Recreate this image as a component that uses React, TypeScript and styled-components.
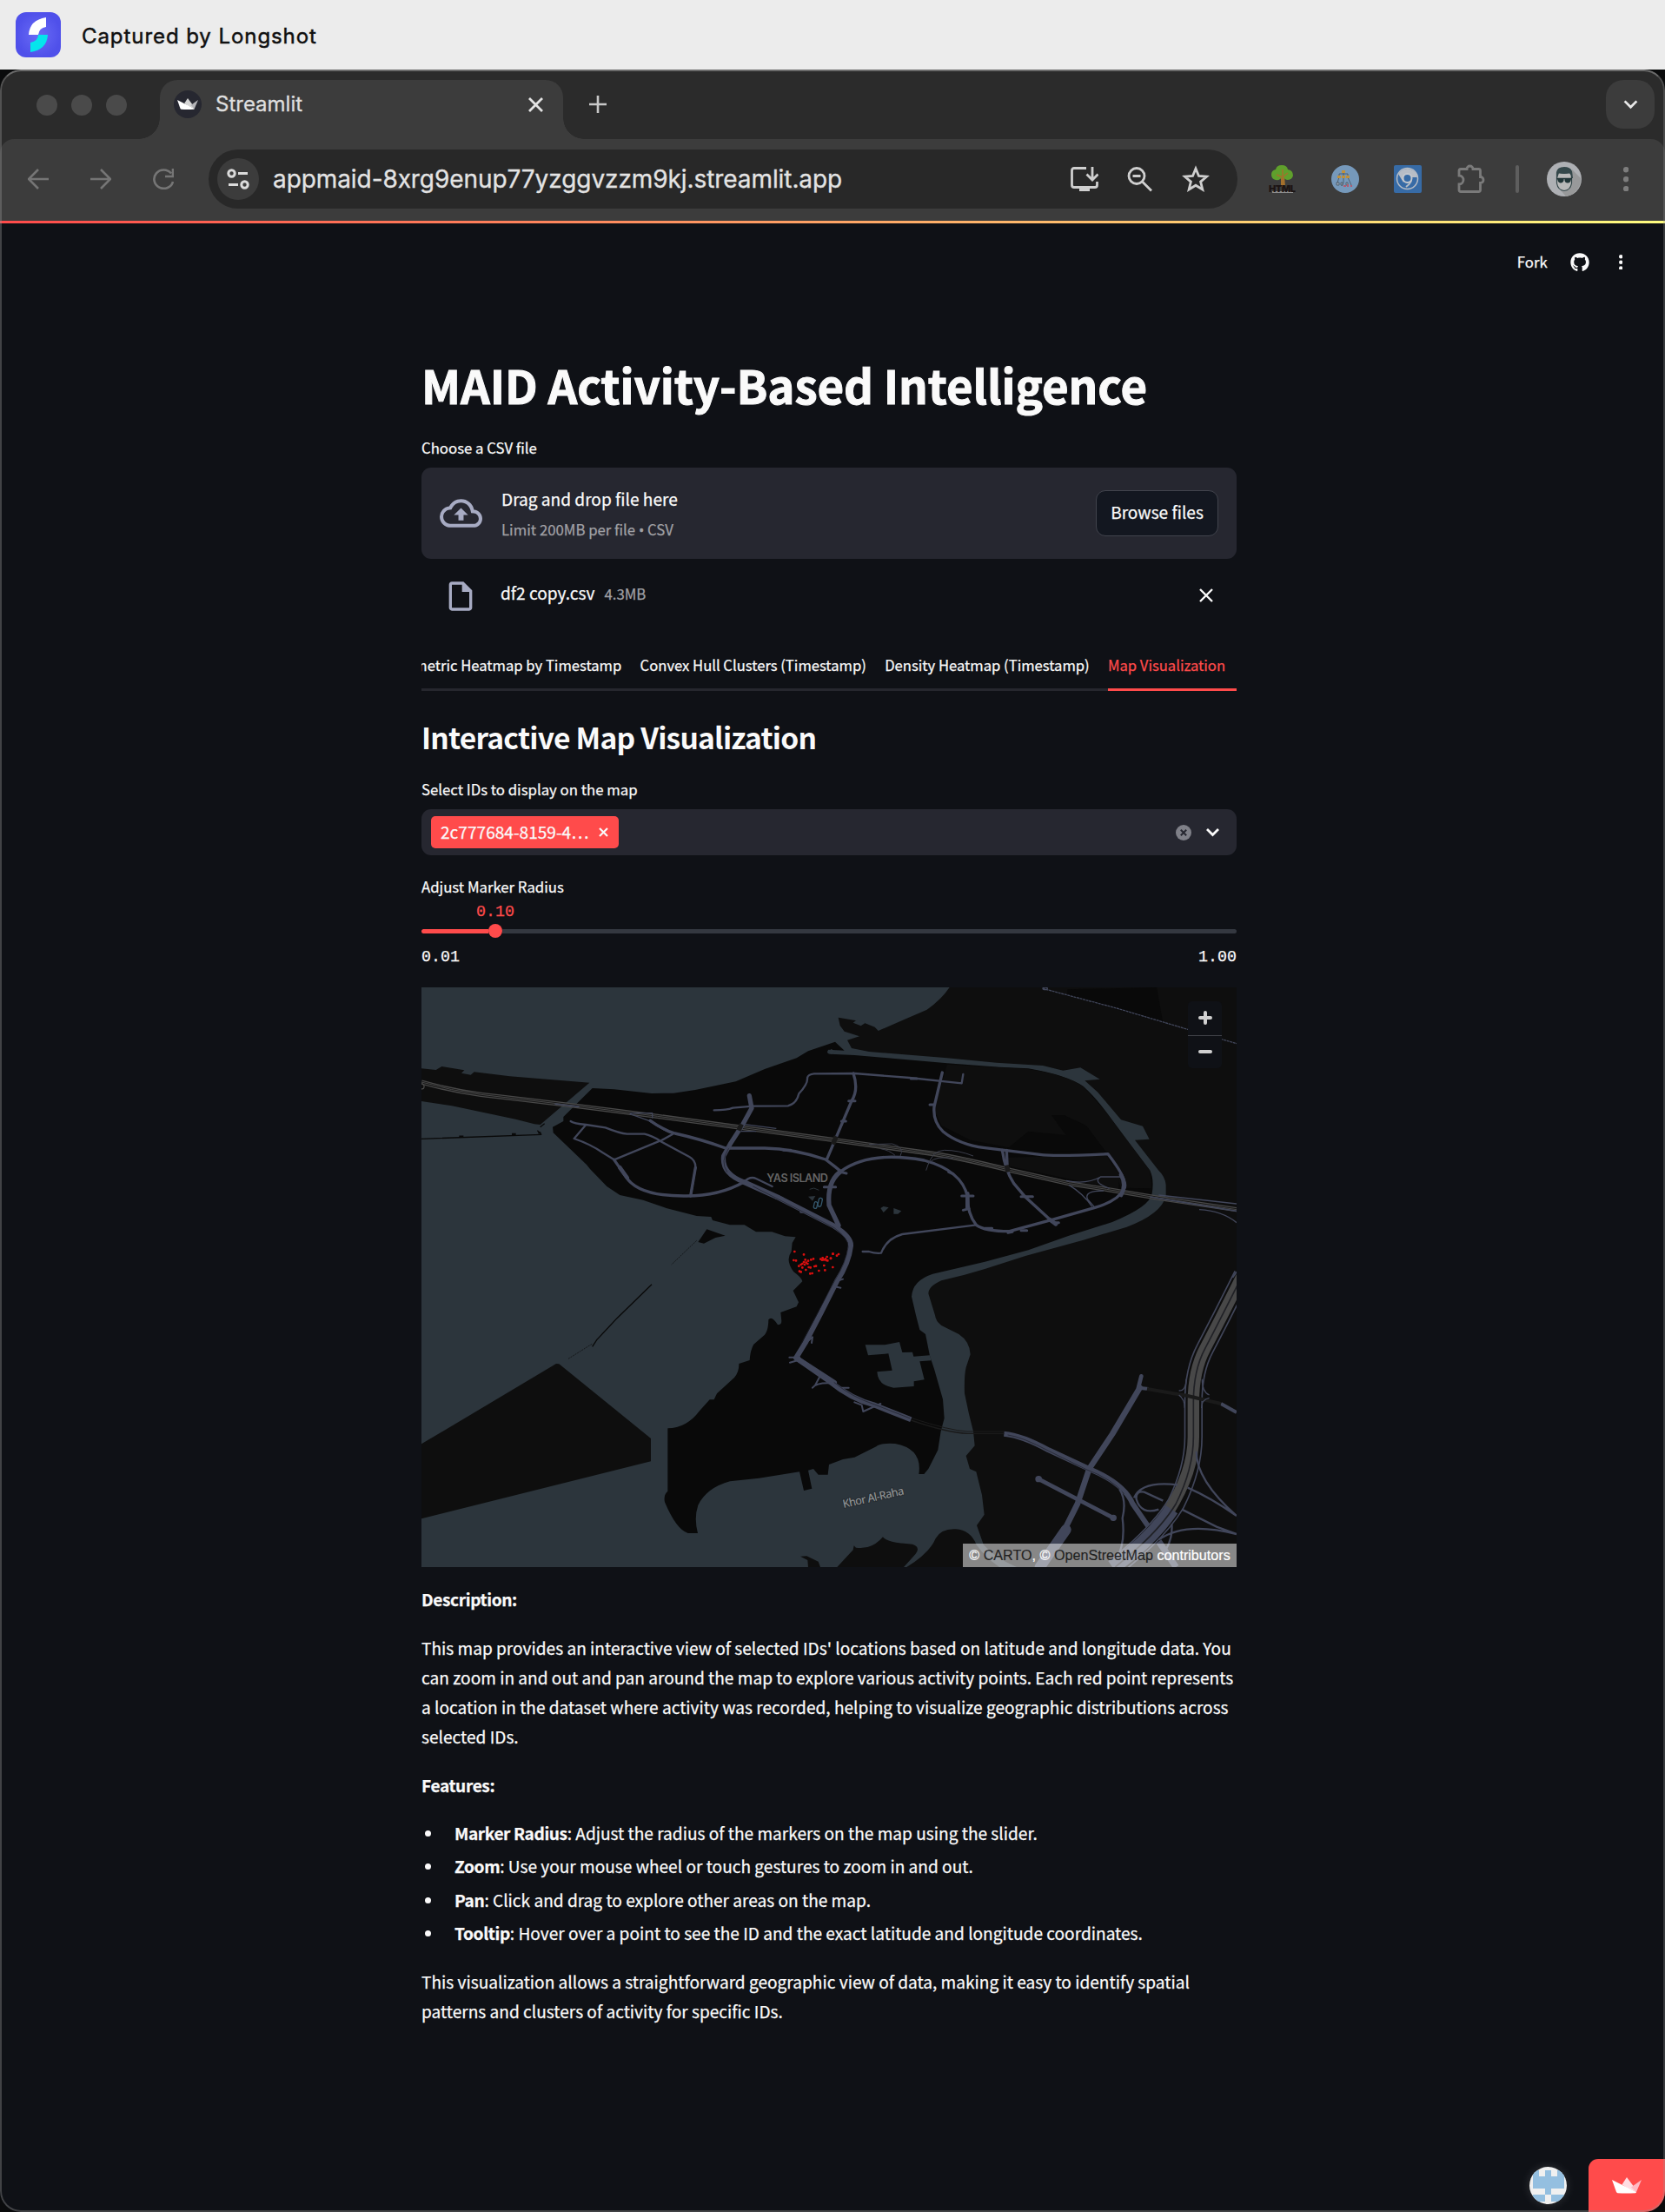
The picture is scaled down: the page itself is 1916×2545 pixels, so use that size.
import React from "react";
import styled, { createGlobalStyle, css } from "styled-components";
import { MdOutlineBackup, MdOutlineInsertDriveFile } from "react-icons/md";
import { FaGithub } from "react-icons/fa";

const sans = `"Noto Sans CJK SC", "Open Sans", sans-serif`;
const system = `Inter, Roboto, sans-serif`;
const mono = `"Liberation Mono", "DejaVu Sans Mono", monospace`;

const c = {
  page: "#0f1116",
  panel: "#262730",
  red: "#ff4b4b",
  text: "#fafafa",
  muted: "#a0a0a5",
  strip: "#2b2b2b",
  bar: "#3c3c3c",
  water: "#2c353c",
  land: "#0e0e0e",
  island: "#090909",
  road: "#41465a",
  rail: "#484848",
};

const GlobalStyle = createGlobalStyle`
  *, *::before, *::after { box-sizing: border-box; }
  body { margin: 0; background: #0a0b0c; }
  h1, h2, p, ul { margin: 0; padding: 0; }
  button { font: inherit; color: inherit; padding: 0; border: 0; background: none; }
  svg { display: block; flex: none; }
`;

const Screen = styled.div`
  width: 1916px;
  height: 2545px;
  display: flex;
  flex-direction: column;
  overflow: hidden;
  background: #0a0b0c;
  color: ${c.text};
  font-family: ${sans};
`;

const Banner = styled.header`
  height: 80px;
  flex: none;
  display: flex;
  align-items: center;
  gap: 24px;
  padding-left: 18px;
  background: #ececec;
  color: #101010;
  font: 500 24px/30px ${system};
`;

const BannerText = styled.span`
  letter-spacing: 0.93px;
  font-weight: 400;
  -webkit-text-stroke: 0.5px #101010;
  padding-top: 4px;
`;

const BrowserWindow = styled.section`
  position: relative;
  flex: 1;
  display: flex;
  flex-direction: column;
  border-radius: 24px;
  overflow: hidden;
  background: ${c.strip};
  &::after {
    content: "";
    position: absolute;
    inset: 0;
    border: 2px solid rgba(150, 150, 150, 0.38);
    border-right-color: rgba(150, 150, 150, 0.3);
    border-top-color: rgba(170, 170, 170, 0.5);
    border-radius: 24px;
    pointer-events: none;
  }
`;

const TabStrip = styled.div`
  height: 80px;
  flex: none;
  display: flex;
  align-items: flex-end;
  padding: 0 12px 0 42px;
  font-family: ${system};
`;

const Lights = styled.div`
  display: flex;
  gap: 16px;
  height: 68px;
  width: 142px;
  padding-top: 17px;
`;

const Light = styled.i`
  width: 24px;
  height: 24px;
  border-radius: 50%;
  background: #4a4a4a;
`;

const flare = css`
  content: "";
  position: absolute;
  bottom: 0;
  width: 24px;
  height: 24px;
`;

const BrowserTab = styled.div`
  position: relative;
  width: 464px;
  height: 68px;
  display: flex;
  align-items: center;
  padding: 0 23px 12px 16px;
  border-radius: 20px 20px 0 0;
  background: ${c.bar};
  color: #dedede;
  font-size: 24px;
  -webkit-text-stroke: 0.3px #dedede;
  &::before {
    ${flare}
    left: -24px;
    background: radial-gradient(circle at 0 0, transparent 23.5px, ${c.bar} 24px);
  }
  &::after {
    ${flare}
    right: -24px;
    background: radial-gradient(circle at 100% 0, transparent 23.5px, ${c.bar} 24px);
  }
`;

const Favicon = styled.span`
  width: 32px;
  height: 32px;
  border-radius: 50%;
  display: grid;
  place-items: center;
  background: #262730;
`;

const TabTitle = styled.span`
  flex: 1;
  margin-left: 16px;
  line-height: 30px;
`;

const NewTab = styled.button`
  height: 68px;
  padding: 0 0 12px 30px;
  flex: 1;
`;

const TabSearch = styled.button`
  width: 56px;
  height: 56px;
  margin-bottom: 12px;
  border-radius: 20px;
  display: grid;
  place-items: center;
  background: ${c.bar};
`;

const Toolbar = styled.div`
  height: 94px;
  flex: none;
  display: flex;
  align-items: center;
  padding: 0 40px 2px 32px;
  border-radius: 16px 16px 0 0;
  background: ${c.bar};
`;

const NavButtons = styled.div`
  display: flex;
  gap: 48px;
  margin-right: 40px;
`;

const AddressBar = styled.div`
  width: 1184px;
  height: 68px;
  display: flex;
  align-items: center;
  gap: 32px;
  padding: 0 32px 0 10px;
  border-radius: 34px;
  background: #282828;
`;

const SiteInfo = styled.span`
  width: 48px;
  height: 48px;
  margin-right: -16px;
  border-radius: 50%;
  display: grid;
  place-items: center;
  background: ${c.bar};
`;

const Url = styled.span`
  flex: 1;
  color: #e3e3e3;
  font: 400 28px/36px ${system};
  letter-spacing: -0.08px;
  -webkit-text-stroke: 0.3px #e3e3e3;
  white-space: nowrap;
`;

const Extensions = styled.div`
  display: flex;
  align-items: center;
  gap: 40px;
  margin-left: 36px;
`;

const Divider = styled.i`
  width: 4px;
  height: 32px;
  margin: 0 32px 0 34px;
  border-radius: 2px;
  background: #5e5e5e;
`;

const MenuDots = styled.span`
  margin-left: 48px;
`;

const Decoration = styled.div`
  height: 3px;
  flex: none;
  background: linear-gradient(90deg, #ff4b4b, #fffd80);
`;

const Page = styled.div`
  flex: 1;
  display: flex;
  flex-direction: column;
  background: ${c.page};
`;

const AppHeader = styled.div`
  height: 89px;
  flex: none;
  display: flex;
  align-items: center;
  justify-content: flex-end;
  padding-right: 49px;
  font-size: 16.7px;
  line-height: 24px;
  -webkit-text-stroke: 0.25px ${c.text};
`;

const ForkButton = styled.button`
  margin: -1px 26px 0 0;
`;

const KebabButton = styled.button`
  margin-left: 34px;
`;

const Main = styled.main`
  width: 938px;
  margin: 61px 0 0 485px;
  display: flex;
  flex-direction: column;
  -webkit-text-stroke-width: 0.25px;
`;

const Title = styled.h1`
  font-size: 52.8px;
  line-height: 70px;
  font-weight: 700;
  white-space: nowrap;
  letter-spacing: -0.1px;
  -webkit-text-stroke-width: 1px;
`;

const Label = styled.div<{ $top: number; $bottom: number }>`
  margin-top: ${(p) => p.$top}px;
  margin-bottom: ${(p) => p.$bottom}px;
  font-size: 16.75px;
  line-height: 24px;
`;

const DropZone = styled.div`
  height: 105px;
  display: flex;
  align-items: center;
  padding: 0 21px;
  border-radius: 11px;
  background: ${c.panel};
`;

const DropText = styled.div`
  flex: 1;
  margin: 3px 0 0 22px;
  display: flex;
  flex-direction: column;
  gap: 5px;
  font-size: 19.1px;
  line-height: 30px;
`;

const Small = styled.small`
  font-size: 16.75px;
  color: ${c.muted};
`;

const Bullet = styled.span`
  font-family: "Noto Sans", sans-serif;
`;

const BrowseButton = styled.button`
  width: 141px;
  height: 53px;
  padding-bottom: 3px;
  border: 1px solid #41434c;
  border-radius: 11px;
  background: #131720;
  font-size: 19.1px;
`;

const FileRow = styled.div`
  height: 77px;
  display: flex;
  align-items: center;
  padding: 0 27px 0 25px;
`;

const FileIcon = styled.span`
  margin: 9px 26px 0 0;
  color: #a7abc3;
`;

const FileName = styled.span`
  flex: 1;
  display: flex;
  align-items: baseline;
  gap: 11px;
  padding-top: 2px;
  font-size: 19.1px;
  line-height: 30px;
`;

const RemoveFile = styled.button`
  margin-top: 7px;
`;

const TabList = styled.nav`
  height: 57px;
  margin-top: 18px;
  display: flex;
  justify-content: flex-end;
  overflow: hidden;
  box-shadow: inset 0 -3px #26272e;
`;

const PageTab = styled.div<{ $active?: boolean }>`
  flex: none;
  width: ${(p) => (p.$active ? "148px" : "auto")};
  height: 57px;
  margin-left: 21.3px;
  font-size: 16.63px;
  line-height: 54px;
  white-space: nowrap;
  color: ${(p) => (p.$active ? c.red : c.text)};
  box-shadow: ${(p) => (p.$active ? `inset 0 -3px ${c.red}` : "none")};
`;

const Heading = styled.h2`
  margin: 31px 0 -1px;
  font-size: 33.6px;
  line-height: 44px;
  font-weight: 700;
  letter-spacing: -0.78px;
  white-space: nowrap;
  -webkit-text-stroke-width: 0;
`;

const Select = styled.div`
  height: 53px;
  display: flex;
  align-items: center;
  padding: 0 19px 0 11px;
  border-radius: 11px;
  background: ${c.panel};
`;

const Tag = styled.span`
  width: 216px;
  height: 37px;
  margin-right: auto;
  display: flex;
  align-items: center;
  justify-content: space-between;
  padding: 0 12px 1px 11px;
  border-radius: 5px;
  background: ${c.red};
  font-size: 19.1px;
`;

const ClearIcon = styled.span`
  margin-right: 16px;
`;

const SliderValue = styled.div`
  width: 44px;
  margin: 7px 0 4px 63px;
  color: ${c.red};
  font: 18.3px/20px ${mono};
`;

const Track = styled.div`
  height: 16px;
  display: flex;
  align-items: center;
`;

const TrackFill = styled.i`
  width: 77px;
  height: 5px;
  border-radius: 3px 0 0 3px;
  background: ${c.red};
`;

const Thumb = styled.i`
  width: 16px;
  height: 16px;
  border-radius: 50%;
  background: ${c.red};
`;

const TrackRest = styled.i`
  flex: 1;
  height: 5px;
  background: #343840;
  border-radius: 0 3px 3px 0;
`;

const SliderRange = styled.div`
  display: flex;
  justify-content: space-between;
  margin-top: 12px;
  font: 18.3px/20px ${mono};
`;

const MapFrame = styled.div`
  position: relative;
  height: 667px;
  margin-top: 25px;
  -webkit-text-stroke-width: 0;
`;

const MapZoom = styled.div`
  position: absolute;
  top: 16px;
  right: 17px;
  width: 39px;
  border-radius: 5px;
  background: ${c.page};
`;

const MapZoomButton = styled.button`
  width: 39px;
  height: 38.5px;
  display: grid;
  place-items: center;
  & + & {
    border-top: 1px solid #3f4148;
  }
`;

const Attribution = styled.div`
  position: absolute;
  right: 0;
  bottom: 0;
  width: 315px;
  height: 27px;
  background: rgba(255, 255, 255, 0.5);
  color: #fff;
  font: 16.15px/27px "Liberation Sans", Arial, sans-serif;
  -webkit-text-stroke-width: 0.2px;
  text-align: center;
  white-space: nowrap;
`;

const AttributionLink = styled.span`
  color: rgba(0, 0, 0, 0.75);
`;

const Prose = styled.div`
  display: flex;
  flex-direction: column;
  gap: 22px;
  margin-top: 19.7px;
  font-size: 19.1px;
  line-height: 34px;
  white-space: nowrap;
`;

const Strong = styled.b`
  letter-spacing: -0.37px;
`;

const FeatureList = styled.ul`
  display: flex;
  flex-direction: column;
  gap: 4.5px;
  margin-top: -1px;
  list-style: none;
`;

const Feature = styled.li`
  display: flex;
  align-items: center;
  &::before {
    content: "";
    width: 7px;
    height: 7px;
    margin: 1px 27px 0 4px;
    border-radius: 50%;
    background: ${c.text};
  }
`;

const Footer = styled.footer`
  margin-top: auto;
  display: flex;
  justify-content: flex-end;
  align-items: center;
  gap: 25px;
`;

const Creator = styled.span`
  width: 43px;
  height: 43px;
  border-radius: 50%;
  overflow: hidden;
  box-shadow: 0 0 12px rgba(255, 255, 255, 0.14);
`;

const HostBadge = styled.span`
  width: 88px;
  height: 61px;
  display: grid;
  place-items: center;
  border-radius: 11px 0 0 0;
  background: ${c.red};
`;

const Cross = ({ size, color = c.text, width = 2.4 }: { size: number; color?: string; width?: number }) => (
  <svg width={size} height={size} viewBox={`0 0 ${size} ${size}`} stroke={color} strokeWidth={width}>
    <path d={`M1 1L${size - 1} ${size - 1}M${size - 1} 1L1 ${size - 1}`} />
  </svg>
);

const Crown = ({ width, tints }: { width: number; tints: [string, string, string] }) => (
  <svg width={width} viewBox="0 0 34 19">
    <path d="M17 0L24.500 10 28 17 17 12 11.500 8.500z" fill={tints[1]} />
    <path d="M34 3L28 17 22 11.500z" fill={tints[2]} />
    <path d="M0 3L28 17Q28 18 27 18.200Q16 19 6.500 18.200Q5.500 18 5 17z" fill={tints[0]} />
  </svg>
);

const LongshotLogo = () => (
  <svg width="52" height="52" viewBox="0 0 52 52">
    <defs>
      <radialGradient id="longshot">
        <stop offset="0" stopColor="#6a6cf6" />
        <stop offset="1" stopColor="#4f50ea" />
      </radialGradient>
    </defs>
    <rect width="52" height="52" rx="12" fill="url(#longshot)" />
    <path d="M35 6V17Q27 18 26 26H15Q16 9 35 6z" fill="#fff" />
    <path d="M17 46V35Q26 33 26 26H37Q36 43 17 46z" fill="#05e5ec" />
  </svg>
);

const BackIcon = ({ flip }: { flip?: boolean }) => (
  <svg width="24" height="24" viewBox="0 0 24 24" fill="none" stroke="#757575" strokeWidth="2.600">
    <path d={flip ? "M0 12H22M12 1L23 12 12 23" : "M24 12H2M12 1L1 12 12 23"} />
  </svg>
);

const ReloadIcon = () => (
  <svg width="24" height="24" viewBox="0 0 24 24" fill="none" stroke="#757575" strokeWidth="2.600">
    <path d="M21 5.500A11 10.700 0 1 0 23 15M23 0V9H14" />
  </svg>
);

const TuneIcon = () => (
  <svg width="26" height="24" viewBox="0 0 26 24" fill="none" stroke="#dcdcdc" strokeWidth="3">
    <circle cx="5.500" cy="5.500" r="3.700" />
    <path d="M13 5.500H24M2 18.500H13" />
    <circle cx="20.500" cy="18.500" r="3.700" />
  </svg>
);

const InstallIcon = () => (
  <svg width="32" height="32" viewBox="0 0 32 32" fill="none" stroke="#cfcfcf" strokeWidth="2.800">
    <path d="M18 3.500H4Q1.500 3.500 1.500 6V23Q1.500 25.500 4 25.500H28Q30.500 25.500 30.500 23V19M25 2V16M18.500 10.500L25 17 31.500 10.500" />
    <path d="M10 26H22V30H10z" fill="#cfcfcf" stroke="none" />
  </svg>
);

const ZoomOutIcon = () => (
  <svg width="32" height="32" viewBox="0 0 32 32" fill="none" stroke="#cfcfcf" strokeWidth="2.800">
    <circle cx="12" cy="12.500" r="9" />
    <path d="M7.500 12.500H16.500M18.500 19L29 29.500" />
  </svg>
);

const StarIcon = () => (
  <svg width="32" height="32" viewBox="0 0 32 32" fill="none" stroke="#cfcfcf" strokeWidth="2.800">
    <path d="M16 4L19.500 12.500 28.500 13.200 21.600 19.100 23.800 28 16 23.200 8.200 28 10.400 19.100 3.500 13.200 12.500 12.500z" />
  </svg>
);

const HtmlTreeIcon = () => (
  <svg width="32" height="34" viewBox="0 0 32 34">
    <path d="M14 12H18L19 26H14z" fill="#a5702c" />
    <path d="M3 12Q3 7 8 6Q9 1 15 1Q21 1 22 6Q28 7 28 13Q27 18 21 18Q18 17 16 14Q13 19 8 18Q3 17 3 12z" fill="#5fa02c" />
    <path d="M16 6V22M16 15L9 12M17 14L22 10" stroke="#a5702c" strokeWidth="1.500" />
    <rect x="4" y="31" width="24" height="2" fill="#8d8d8d" />
    <text x="0" y="32" textLength="31" fontFamily="Inter" fontWeight="900" fontSize="11" fill="#1c1414">HTML</text>
  </svg>
);

const HierarchyIcon = () => (
  <svg width="32" height="32" viewBox="0 0 32 32">
    <circle cx="16" cy="16" r="16" fill="#7699bb" />
    <g fill="none" stroke="#48505c" strokeWidth="0.800">
      <path d="M14 8V13M9 13V10H19V13M9 14L7 20M14 14V20M19 14L23 23M14 20L12 24" />
      <path d="M6 20H9V23H6zM11 20H13V23H11zM17 20H19V23H17z" fill="#9aabbd" />
    </g>
    <path d="M12 6H16V9H12zM7 12H11V15H7zM12 12H16V15H12zM17 12H21V15H17z" fill="#c0913a" />
    <path d="M14 23H17V25H14zM18 22H20V25H18zM22 23H24V25H22z" fill="#b05a70" />
  </svg>
);

const ChromiumIcon = () => (
  <svg width="32" height="32" viewBox="0 0 32 32">
    <rect width="32" height="32" rx="2" fill="#376ba6" />
    <circle cx="15.500" cy="15.500" r="12" fill="none" stroke="#b7bdc6" strokeWidth="1.500" />
    <path d="M5 10Q9 4 16 4Q23 5 26 10L27 14H16Q10 14 11 20z" fill="#b7bdc6" />
    <path d="M20 15Q21 20 14 25" fill="none" stroke="#b7bdc6" strokeWidth="2" />
    <circle cx="15.500" cy="15" r="5" fill="#376ba6" stroke="#c4c8ce" strokeWidth="2" />
  </svg>
);

const PuzzleIcon = () => (
  <svg width="34" height="34" viewBox="0 0 34 34" fill="none" stroke="#7a7a7a" strokeWidth="2.800">
    <path d="M5 5.500H12A3.500 3.500 0 0 1 19 5.500H25.500Q27.500 5.500 27.500 7.500V14.500A3.500 3.500 0 0 1 27.500 21.500V29.500Q27.500 31.500 25.500 31.500H5Q3 31.500 3 29.500V23A5 5 0 0 0 3 13V7.500Q3 5.500 5 5.500z" />
  </svg>
);

const ProfileIcon = () => (
  <svg width="40" height="40" viewBox="0 0 40 40">
    <circle cx="20" cy="20" r="20" fill="#aeb0b4" />
    <path d="M29 9L39 19A20 20 0 0 1 22 40L16 33z" fill="#98999a" />
    <path d="M11.500 13V25Q13 33 20 33.500Q27 33 28.500 25V13z" fill="#b9b9b9" stroke="#34474a" strokeWidth="1.200" />
    <path d="M11 19V12Q12 6 20 6Q27 6 29 11L30 19H28Q28 15 26 13Q20 15 14 13L12 19z" fill="#34474a" />
    <path d="M12 19H19.500V22Q18 25 15.500 24.500Q12.500 24 12 19zM20.500 19H28Q28 24 24.500 24.500Q21.500 25 20.500 22z" fill="#223638" />
    <path d="M11 19.500H29" stroke="#223638" strokeWidth="1.500" />
  </svg>
);

const Dots = ({ r, gap, color }: { r: number; gap: number; color: string }) => (
  <svg width={r * 2} height={gap * 2 + r * 2} fill={color}>
    {[0, 1, 2].map((i) => (
      <circle key={i} cx={r} cy={r + gap * i} r={r} />
    ))}
  </svg>
);

const Identicon = () => (
  <svg width="43" height="43" viewBox="0 0 43 43">
    <rect width="43" height="43" fill="#f0f0f0" />
    <path d="M4 4H11V11H18V4H25V11H32V4H40V25H25V32H40V40H25V32H18V40H4V32H18V25H4z" fill="#94bfe0" />
  </svg>
);

/* Recorded activity, in map units. */
const points = [
  [1303, 930], [1335, 940], [1300, 960], [1308, 961], [1340, 958], [1343, 968], [1335, 966], [1330, 972], [1348, 972],
  [1325, 975], [1318, 980], [1360, 958], [1368, 955], [1358, 985], [1372, 981], [1352, 984], [1320, 998], [1325, 1000],
  [1342, 993], [1357, 1006], [1364, 1005], [1377, 980], [1400, 952], [1404, 958], [1410, 955], [1415, 948], [1398, 959],
  [1405, 978], [1408, 994], [1428, 954], [1436, 938], [1455, 939], [1449, 944], [1417, 961], [1428, 953], [1435, 984],
  [1412, 960], [1393, 956], [1387, 996], [1435, 938], [1350, 962], [1338, 975], [1330, 985],
];

const motorway =
  "M15 345Q120 375 220 388Q500 420 830 463L1440 545 1750 588Q1850 600 2050 650L2250 695 2380 715 2560 745 2829 785";
const highway = "M2850 1010Q2780 1150 2720 1265Q2680 1340 2680 1450V1570Q2680 1680 2620 1800Q2560 1900 2410 2019";

const CityMap = () => (
  <svg width="938" height="667" viewBox="15 18 2814 2001" preserveAspectRatio="none">
    <rect x="15" y="18" width="2814" height="2001" fill={c.water} />
    <g fill={c.land}>
      <path d="M15 298L65 303 85 291 163 304 153 314 185 320 197 310 320 325 595 347 425 492 405 490 340 473 120 427 15 411z" />
      <path d="M15 1594L480 1317 490 1318 807 1575V1654L15 1852z" />
      <path d="M1838 18H2829V2019H2070Q1990 1985 1955 1940L1932 1875 1958 1838 1950 1770 1930 1690 1908 1680 1895 1635 1925 1600 1920 1550 1905 1490 1890 1420Q1888 1360 1895 1330L1910 1285Q1908 1240 1870 1215L1810 1185Q1790 1170 1788 1150L1765 1075Q1765 1050 1810 1030L1890 1010 1960 990 2100 945 2300 890 2450 845Q2570 800 2585 738V700Q2582 670 2560 650L2478 545 2528 542 2505 497 2430 475 2350 380 2305 340 2357 335 2290 295 2230 305 2160 288 2000 278 1830 262 1560 240 1500 228 1485 200 1527 187 1475 170 1460 150 1454 122 1530 135 1580 155 1592 168 1680 130 1760 95Q1810 60 1838 18z" />
      <path d="M1690 2019Q1770 1970 1790 1920Q1810 1885 1860 1888Q1910 1892 1930 1940Q1960 1985 2010 2019z" />
      <path d="M1450 2019L1505 1960 1508 1945 1515 1952Q1570 1960 1608 1915Q1620 1935 1710 1940Q1740 1950 1720 1975L1680 2019z" />
      <path d="M1323 1982L1345 1981 1385 2000 1392 2019H1350L1348 1995z" />
    </g>
    <g fill={c.island}>
      <path d="M605 366L680 370 810 384 885 383 960 372 1100 343 1200 300 1310 262 1350 238 1443 206 1475 236 1420 233Q1410 245 1425 248L1510 252 1650 264 1830 280 2010 293 2110 298Q2240 320 2300 360Q2340 395 2380 450L2450 545 2530 650Q2545 680 2537 730Q2530 775 2400 828L2250 875 2110 925 1960 965 1780 1007Q1710 1030 1707 1085L1722 1150 1735 1200 1755 1215 1770 1290 1785 1335 1815 1440 1820 1505 1808 1550 1798 1615 1765 1680 1750 1698 1732 1698Q1745 1610 1650 1593Q1600 1590 1585 1603L1510 1640 1470 1647 1422 1665 1418 1700 1385 1700 1368 1680 1350 1685 1363 1748 1335 1755 1320 1690 1180 1712 1080 1723Q1000 1745 970 1805Q955 1850 969 1902L935 1902Q895 1890 855 1795Q850 1770 865 1757V1540Q930 1540 975 1480L1010 1441 1025 1441 1035 1420 1095 1365Q1112 1345 1111 1317L1148 1305Q1150 1270 1162 1250L1200 1217Q1213 1200 1213 1165Q1225 1150 1245 1183Q1258 1183 1258 1170L1255 1140 1310 1120 1317 1105 1298 1065 1330 1033Q1328 1020 1300 1000Q1270 960 1292 930L1295 900 1307 880 1270 877 1225 862 1170 862 1130 838 1080 838 1020 822 1015 810 965 807 860 780 780 752 700 735 655 705 597 645 585 630 470 520 468 500 505 480 505 465z" />
      <path d="M2245 25L2553 18 2575 140 2245 45z" />
      <path d="M1000 853L1064 875 1030 882 990 902 970 897z" />
    </g>
    <g fill={c.land}>
      <path d="M1830 284L2110 300Q2240 320 2300 360L2380 450 2530 650 2535 712 2430 710 2385 585 2040 570 1910 545 1810 495 1785 440z" />
      <path d="M2040 605L2380 598 2425 670 2420 715 2230 675 2045 635z" />
      <path d="M2035 577L2110 515 2240 528 2190 460 2235 460 2310 495 2380 588z" fill={c.island} />
    </g>
    <g fill={c.water}>
      <path d="M1547 1252L1615 1252 1665 1242 1675 1278 1710 1277 1714 1292 1770 1288 1775 1306 1735 1309 1751 1372 1715 1378V1395L1645 1400Q1590 1392 1588 1345L1640 1340 1627 1282 1557 1288z" />
      <path d="M1505 140L1520 128 1548 140 1532 151zM1418 240L1430 231 1445 240 1430 248zM1600 780L1610 774 1628 778 1610 795zM1645 780L1672 790 1660 800 1645 800zM1350 740L1375 738 1365 755z" />
    </g>
    <g fill="none" stroke={c.water} strokeWidth="3">
      <path d="M1355 715L1370 711 1387 718" />
    </g>
    <g fill="none" stroke={c.island} strokeWidth="4">
      <path d="M15 541L430 526M415 512L428 524M425 500L440 488M605 1258L620 1235 690 1160 810 1043" />
      <path d="M965 892L878 975M522 1300L605 1248" strokeWidth="2" strokeDasharray="6 3" />
      <path d="M145 533H160M327 525H341M418 520H427" strokeWidth="7" />
    </g>

    {/* Motorway across the island */}
    <g fill="none" strokeLinecap="butt">
      <path d={motorway} stroke={c.rail} strokeWidth="16" />
      <path d={motorway} stroke="#151515" strokeWidth="8" />
      <path d={motorway} stroke={c.rail} strokeWidth="3" />
      <path d="M475 420L560 430M2530 741L2829 790M2560 735L2829 765" stroke={c.road} strokeWidth="5" />
      <path d="M10 345Q30 355 22 367 L12 370" stroke={c.rail} strokeWidth="4" />
    </g>

    {/* Streets */}
    <g fill="none" stroke={c.road} strokeLinejoin="round" strokeLinecap="round">
      <g strokeWidth="7">
        <path d="M530 480Q540 488 583 492L650 502Q700 522 725 524H785Q810 530 840 548L883 524M583 492L542 540Q600 560 640 588L680 613 838 548 940 603Q962 615 961 640L944 738" />
        <path d="M1025 442Q1070 442 1090 434L1160 428 1280 427Q1310 420 1318 385Q1350 350 1347 330Q1350 318 1370 316L1510 315 1700 330 1880 349 1885 318" />
        <path d="M735 455L800 478Q850 512 883 524M738 452L812 452V468" strokeWidth="4" />
        <path d="M1538 930H1560Q1580 937 1602 935Q1620 885 1675 870L1930 838" />
      </g>
      <g strokeWidth="10">
        <path d="M961 640L944 738" />
        <path d="M805 478Q850 510 890 522Q980 542 1065 573H1200Q1300 575 1410 612L1440 635 1465 655" />
        <path d="M680 613L720 670Q760 738 920 738Q1040 740 1128 690" />
        <path d="M1506 315Q1525 370 1500 410L1415 610" />
        <path d="M1813 312L1785 430Q1780 480 1815 515Q1870 560 1960 572L2150 595Q2200 602 2385 593Q2460 690 2440 715Q2420 755 2340 778L2200 818 2045 860Q1960 860 1930 838Q1900 800 1900 740Q1880 650 1750 615Q1560 580 1460 655" />
        <path d="M2020 580Q2030 650 2060 695L2100 742 2185 820M2035 580L2038 650" />
        <path d="M1128 690Q1150 668 1170 678L1226 705" strokeWidth="7" />
      </g>
      <g strokeWidth="18">
        <path d="M1147 392L1155 435 1125 490 1080 560 1058 600Q1050 660 1128 690" strokeWidth="16" />
        <path d="M1128 690L1250 745 1440 842Q1500 880 1497 910Q1490 970 1450 1030L1395 1140 1340 1245 1308 1297 1440 1382" />
        <path d="M1460 655Q1415 690 1422 770L1455 840" strokeWidth="16" />
        <path d="M1900 730V780M2185 820L2205 835M700 640L725 675M2430 665Q2450 700 2430 735" strokeWidth="14" />
        <path d="M1308 1297L1420 1375Q1500 1440 1580 1460L1705 1510" strokeLinecap="butt" />
        <path d="M2026 1559Q2090 1565 2180 1615L2320 1680Q2440 1730 2470 1800L2525 1880" strokeLinecap="butt" />
        <path d="M2495 1400L2400 1560 2320 1680 2280 1800 2220 1920 2160 2019" strokeWidth="20" />
        <path d="M2240 1890L2150 2019" strokeWidth="36" />
        <path d="M2145 1715L2405 1850M2500 1360L2490 1400" strokeWidth="14" />
        <path d="M2145 1715H2146M2403 1849H2404" strokeWidth="22" />
        <path d="M2775 1455L2829 1485M2490 1400L2525 1404" strokeLinecap="butt" strokeWidth="12" />
      </g>
      <path d="M1285 1295H1320M1287 1313L1315 1305M1365 1400Q1380 1380 1440 1385L1395 1352 1375 1390M1510 1450L1535 1460 1540 1482M1600 1455L1540 1482M1455 1400H1490M1350 1238L1365 1225 1362 1245M1455 1030L1470 1025M1440 1050L1462 1055" strokeWidth="6" />
      <path d="M1405 707H1445M1490 410H1512M1465 480H1480M1880 738H1920M1885 787L1905 782M1835 655L1850 662M1960 850H1985M2040 865L2055 862M2085 857H2105M2085 740H2125M2200 830H2215M1115 686L1145 700M1265 580H1290M1705 333H1725M1770 423H1785M1240 745H1260M1325 793H1350M1460 655L1482 660" strokeWidth="9" />
      <path d="M1160 705L1440 848Q1490 885 1488 915Q1480 970 1442 1030L1325 1250M1440 1382Q1500 1432 1580 1458L1700 1505M2040 1563Q2090 1570 2180 1618L2310 1682Q2400 1715 2440 1765M1075 575Q1045 620 1070 655" stroke="#1c1e28" strokeWidth="2" />
    </g>

    {/* Ramps, bridges and the eastern highway */}
    <g fill="none" stroke={c.rail} strokeWidth="3">
      <path d="M1560 560L1640 558Q1685 570 1668 600M1600 575Q1630 580 1650 598M1757 650Q1775 580 1820 580Q1870 580 1920 600M1772 620Q1790 600 1850 608" stroke="#3a3d4a" />
      <path d="M2240 685Q2310 700 2360 672H2430M2390 712Q2330 690 2360 672M2250 700Q2300 730 2330 775M2370 720Q2300 720 2315 750L2340 778" stroke={c.road} strokeWidth="4" />
      <path d="M2700 785Q2780 790 2829 830M1125 490L1240 505M1110 515H1170" stroke={c.road} strokeWidth="4" />
    </g>
    <g fill="none" stroke="#1a1a1a" strokeWidth="16">
      <path d="M1120 490L1110 512M1447 532L1435 560M2035 632L2040 655" />
      <path d="M1705 1512Q1830 1555 1900 1558H2026" strokeWidth="4" />
      <path d="M1708 1505Q1840 1548 1900 1551H2026" strokeWidth="3" />
    </g>
    <g fill="none" strokeLinecap="butt">
      <path d={highway} stroke={c.road} strokeWidth="64" />
      <path d={highway} stroke={c.land} strokeWidth="54" />
      <path d="M2850 1010Q2780 1150 2720 1265Q2680 1340 2680 1450V1570Q2680 1690 2595 1825" stroke={c.rail} strokeWidth="40" />
      <path d="M2605 1820Q2530 1930 2400 2019" stroke={c.road} strokeWidth="50" />
      <path d={highway} stroke="#202126" strokeWidth="5" />
      <path d="M2520 1404L2660 1428 2775 1455" stroke="#1a1a1a" strokeWidth="12" />
      <path d="M2829 1000L2815 1020" stroke={c.road} strokeWidth="6" />
    </g>
    <g fill="none" stroke={c.road} strokeWidth="7">
      <path d="M2625 1735Q2500 1720 2475 1780M2575 1790L2510 1760Q2480 1755 2483 1785Q2500 1840 2560 1820M2690 1620Q2690 1720 2829 1842M2660 1745Q2740 1780 2829 1842M2640 1820L2760 1880 2829 1905Q2650 1860 2560 1925M2425 1750Q2450 1790 2435 1850Q2445 1930 2420 1980M2605 1870Q2610 1930 2570 1980" />
      <path d="M2560 1930L2620 2019" strokeWidth="22" />
      <path d="M2630 1410Q2655 1410 2655 1370M2630 1425Q2650 1440 2650 1470M2710 1370Q2710 1415 2735 1425M2708 1470Q2708 1440 2735 1435" strokeWidth="4" />
    </g>
    <path d="M2160 22L2415 90 2660 163 2829 212" fill="none" stroke={c.road} strokeWidth="4" strokeDasharray="9 2" />
    <ellipse cx="2168" cy="22" rx="8" ry="4" fill="none" stroke={c.road} strokeWidth="4" />
    <g fill="none" stroke="#34576c" strokeWidth="4">
      <rect x="1370" y="758" width="11" height="23" rx="5" transform="rotate(12 1375 770)" />
      <rect x="1385" y="745" width="12" height="30" rx="6" transform="rotate(12 1391 760)" />
    </g>
    <g fill="#d90f0f">
      {points.map(([x, y], i) => (
        <rect key={i} x={x - 4} y={y - 4} width="8" height="8" rx="3" />
      ))}
    </g>
    <text x="1207" y="689" textLength="212" fontFamily="Inter, sans-serif" fontWeight="600" fontSize="38" fill="#646464">
      YAS ISLAND
    </text>
    <text x="0" y="0" transform="translate(1472 1815) rotate(-12.500)" textLength="216" fontFamily="Noto Sans, sans-serif" fontWeight="500" fontSize="39" fill="#8c9092" stroke="#24292d" strokeWidth="5" paintOrder="stroke">
      Khor Al-Raha
    </text>
  </svg>
);

const features: [string, string][] = [
  ["Marker Radius", "Adjust the radius of the markers on the map using the slider."],
  ["Zoom", "Use your mouse wheel or touch gestures to zoom in and out."],
  ["Pan", "Click and drag to explore other areas on the map."],
  ["Tooltip", "Hover over a point to see the ID and the exact latitude and longitude coordinates."],
];

const tabs = ["metric Heatmap by Timestamp", "Convex Hull Clusters (Timestamp)", "Density Heatmap (Timestamp)", "Map Visualization"];

export default function App() {
  return (
    <Screen>
      <GlobalStyle />
      <Banner>
        <LongshotLogo />
        <BannerText>Captured by Longshot</BannerText>
      </Banner>
      <BrowserWindow>
        <TabStrip>
          <Lights>
            <Light />
            <Light />
            <Light />
          </Lights>
          <BrowserTab>
            <Favicon>
              <Crown width={24} tints={["#ffffff", "#d6d6d6", "#b4b4b8"]} />
            </Favicon>
            <TabTitle>Streamlit</TabTitle>
            <Cross size={17} color="#e3e3e3" width={2.8} />
          </BrowserTab>
          <NewTab>
            <svg width="20" height="20" viewBox="0 0 20 20" stroke="#c8c8c8" strokeWidth="2.600">
              <path d="M10 0V20M0 10H20" />
            </svg>
          </NewTab>
          <TabSearch>
            <svg width="17" height="11" viewBox="0 0 18 12" fill="none" stroke="#e8e8e8" strokeWidth="3">
              <path d="M1.500 1.500L9 9 16.500 1.500" />
            </svg>
          </TabSearch>
        </TabStrip>
        <Toolbar>
          <NavButtons>
            <BackIcon />
            <BackIcon flip />
            <ReloadIcon />
          </NavButtons>
          <AddressBar>
            <SiteInfo>
              <TuneIcon />
            </SiteInfo>
            <Url>appmaid-8xrg9enup77yzggvzzm9kj.streamlit.app</Url>
            <InstallIcon />
            <ZoomOutIcon />
            <StarIcon />
          </AddressBar>
          <Extensions>
            <HtmlTreeIcon />
            <HierarchyIcon />
            <ChromiumIcon />
            <PuzzleIcon />
          </Extensions>
          <Divider />
          <ProfileIcon />
          <MenuDots>
            <Dots r={3.2} gap={11} color="#7d7d7d" />
          </MenuDots>
        </Toolbar>
        <Decoration />
        <Page>
          <AppHeader>
            <ForkButton>Fork</ForkButton>
            <FaGithub size={22} />
            <KebabButton>
              <Dots r={2.2} gap={6.6} color="#fafafa" />
            </KebabButton>
          </AppHeader>
          <Main>
            <Title>MAID Activity-Based Intelligence</Title>
            <Label $top={26} $bottom={11}>Choose a CSV file</Label>
            <DropZone>
              <MdOutlineBackup size={49} color="#a7abc3" />
              <DropText>
                <span>Drag and drop file here</span>
                <Small>
                  Limit 200MB per file <Bullet>•</Bullet> CSV
                </Small>
              </DropText>
              <BrowseButton>Browse files</BrowseButton>
            </DropZone>
            <FileRow>
              <FileIcon>
                <MdOutlineInsertDriveFile size={40} />
              </FileIcon>
              <FileName>
                df2 copy.csv
                <Small>4.3MB</Small>
              </FileName>
              <RemoveFile>
                <Cross size={16} />
              </RemoveFile>
            </FileRow>
            <TabList>
              {tabs.map((name, i) => (
                <PageTab key={name} $active={i === tabs.length - 1}>
                  {name}
                </PageTab>
              ))}
            </TabList>
            <Heading>Interactive Map Visualization</Heading>
            <Label $top={27} $bottom={11}>Select IDs to display on the map</Label>
            <Select>
              <Tag>
                2c777684-8159-4…
                <Cross size={11} width={2.2} />
              </Tag>
              <ClearIcon>
                <svg width="18" height="18" viewBox="0 0 18 18">
                  <circle cx="9" cy="9" r="9" fill="#7f8088" />
                  <path d="M5.800 5.800L12.200 12.200M12.200 5.800L5.800 12.200" stroke={c.panel} strokeWidth="2" />
                </svg>
              </ClearIcon>
              <svg width="17" height="11" viewBox="0 0 17 11" fill="none" stroke={c.text} strokeWidth="2.800">
                <path d="M2 2L8.500 8.500 15 2" />
              </svg>
            </Select>
            <Label $top={24} $bottom={0}>Adjust Marker Radius</Label>
            <SliderValue>0.10</SliderValue>
            <Track>
              <TrackFill />
              <Thumb />
              <TrackRest />
            </Track>
            <SliderRange>
              <span>0.01</span>
              <span>1.00</span>
            </SliderRange>
            <MapFrame>
              <CityMap />
              <MapZoom>
                <MapZoomButton>
                  <svg width="16" height="16" stroke="#d0d0d0" strokeWidth="4" strokeLinecap="round">
                    <path d="M8 2V14M2 8H14" />
                  </svg>
                </MapZoomButton>
                <MapZoomButton>
                  <svg width="16" height="16" stroke="#d0d0d0" strokeWidth="4" strokeLinecap="round">
                    <path d="M2 8H14" />
                  </svg>
                </MapZoomButton>
              </MapZoom>
              <Attribution>
                © <AttributionLink>CARTO</AttributionLink>, © <AttributionLink>OpenStreetMap</AttributionLink> contributors
              </Attribution>
            </MapFrame>
            <Prose>
              <p>
                <Strong>Description:</Strong>
              </p>
              <p>
                This map provides an interactive view of selected IDs' locations based on latitude and longitude data. You
                <br />
                can zoom in and out and pan around the map to explore various activity points. Each red point represents
                <br />
                a location in the dataset where activity was recorded, helping to visualize geographic distributions across
                <br />
                selected IDs.
              </p>
              <p>
                <Strong>Features:</Strong>
              </p>
              <FeatureList>
                {features.map(([name, detail]) => (
                  <Feature key={name}>
                    <span>
                      <Strong>{name}</Strong>: {detail}
                    </span>
                  </Feature>
                ))}
              </FeatureList>
              <p>
                This visualization allows a straightforward geographic view of data, making it easy to identify spatial
                <br />
                patterns and clusters of activity for specific IDs.
              </p>
            </Prose>
          </Main>
          <Footer>
            <Creator>
              <Identicon />
            </Creator>
            <HostBadge>
              <Crown width={34} tints={["#ffffff", "#ffdde3", "#ffb9c3"]} />
            </HostBadge>
          </Footer>
        </Page>
      </BrowserWindow>
    </Screen>
  );
}
